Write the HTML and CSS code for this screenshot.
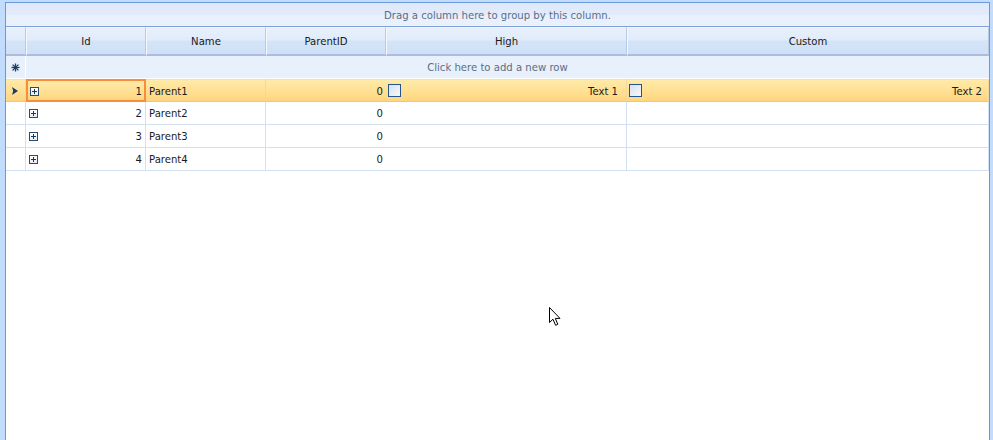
FILE: index.html
```html
<!DOCTYPE html>
<html>
<head>
<meta charset="utf-8">
<link rel="stylesheet" href="styles.css">
</head>
<body>
<div class="frame">
  <div class="group-panel">Drag a column here to group by this column.</div>
  <div class="grid">
    <div class="hdr ind"></div>
    <div class="hdr">Id</div>
    <div class="hdr">Name</div>
    <div class="hdr">ParentID</div>
    <div class="hdr">High</div>
    <div class="hdr">Custom</div>

    <div class="newrow ind"><svg width="9" height="9" viewBox="0 0 9 9"><g stroke="#1f3d66" stroke-width="1.3"><line x1="4.5" y1="0.5" x2="4.5" y2="8.5"/><line x1="0.5" y1="4.5" x2="8.5" y2="4.5"/><line x1="1.6" y1="1.6" x2="7.4" y2="7.4"/><line x1="7.4" y1="1.6" x2="1.6" y2="7.4"/></g></svg></div>
    <div class="newrow span">Click here to add a new row</div>

    <div class="cell ind sel"><svg width="6" height="8" viewBox="0 0 6 8"><path d="M0 0 L6 4 L0 8 L1.2 4 Z" fill="#1c3a63"/></svg></div>
    <div class="cell sel focus"><span class="exp"></span><span class="num">1</span></div>
    <div class="cell sel">Parent1</div>
    <div class="cell sel right">0</div>
    <div class="cell sel chk"><span class="box"></span><span class="num">Text 1</span></div>
    <div class="cell sel chk last"><span class="box"></span><span class="num">Text 2</span></div>

    <div class="cell ind"></div>
    <div class="cell"><span class="exp"></span><span class="num">2</span></div>
    <div class="cell">Parent2</div>
    <div class="cell right">0</div>
    <div class="cell"></div>
    <div class="cell"></div>

    <div class="cell ind"></div>
    <div class="cell"><span class="exp"></span><span class="num">3</span></div>
    <div class="cell">Parent3</div>
    <div class="cell right">0</div>
    <div class="cell"></div>
    <div class="cell"></div>

    <div class="cell ind"></div>
    <div class="cell"><span class="exp"></span><span class="num">4</span></div>
    <div class="cell">Parent4</div>
    <div class="cell right">0</div>
    <div class="cell"></div>
    <div class="cell"></div>
  </div>
  <svg class="cursor" width="13" height="20" viewBox="0 0 13 20"><path d="M0.5 0.5 L0.5 15.5 L4 12.2 L6.6 18.3 L8.8 17.3 L6.3 11.4 L11 11.4 Z" fill="#fff" stroke="#000" stroke-width="1" stroke-linejoin="round"/></svg>
</div>
</body>
</html>
```
FILE: styles.css
```css
html, body {
  margin: 0;
  padding: 0;
  background: #c2dcfd;
  height: 440px;
  overflow: hidden;
}
.frame {
  position: relative;
  margin: 2px 3px 0 5px;
  height: 438px;
  box-sizing: border-box;
  background: #fff;
  border: 1px solid #6b98d6;
  border-bottom: none;
  font-family: "DejaVu Sans", sans-serif;
  font-size: 10.1px;
  color: #1b1b1b;
}
.group-panel {
  height: 23px;
  line-height: 25px;
  text-align: center;
  color: #5a6d88;
  background: linear-gradient(#dfe9fa 0, #e1ebfa 50%, #e8f0fc 51%, #eaf1fc 100%);
  border-bottom: 1px solid #7fa3d6;
}
.grid {
  display: grid;
  grid-template-columns: 20px 120px 120px 120px 241px 1fr;
  grid-template-rows: 29px 23px 23px 23px 23px 23px;
}
.hdr {
  box-sizing: border-box;
  background: linear-gradient(#e8f0fc 0, #e1ebfa 45%, #d4e4f8 52%, #cfe0f7 100%);
  border-right: 1px solid #b8cbe3;
  border-left: 1px solid #f4f8fe;
  border-bottom: 2px solid #a9bedb;
  border-top: 1px solid #f1f6fd;
  display: flex;
  align-items: center;
  justify-content: center;
  color: #1a1a1a;
}
.hdr.ind {
  border-left: none;
}
.newrow {
  box-sizing: border-box;
  background: #e8f0fb;
  border-bottom: 1px solid #fff;
  border-right: 1px solid #fff;
  display: flex;
  align-items: center;
  justify-content: center;
  color: #5d6e86;
}
.newrow.span {
  grid-column: 2 / span 5;
  border-right: none;
  padding-right: 20px;
}
.cell {
  box-sizing: border-box;
  border-right: 1px solid #d3e0f1;
  border-bottom: 1px solid #d3e0f1;
  display: flex;
  align-items: center;
  padding: 1px 3px 0 3px;
  white-space: nowrap;
}
.cell:nth-child(6n) {
  border-right: none;
}
.cell.ind {
  justify-content: center;
  padding: 1px 1px 0 0;
}
.cell.right {
  justify-content: flex-end;
}
.cell.sel {
  background: linear-gradient(#ffeaa9 0, #ffe195 50%, #ffd57f 100%);
  border-top: 1px solid #ffe08e;
  border-bottom: 1px solid #ffc35c;
  border-right-color: #f3d89c;
}
.cell.focus {
  border: 2px solid #f88d3a;
  padding: 1px 2px 0 2px;
}
.exp {
  box-sizing: border-box;
  width: 9px;
  height: 9px;
  border: 1px solid #2a4a72;
  background: linear-gradient(#ffffff, #e6ecf4);
  position: relative;
  flex: none;
}
.exp::before {
  content: "";
  position: absolute;
  left: 1px;
  top: 3px;
  width: 5px;
  height: 1px;
  background: #1e3556;
}
.exp::after {
  content: "";
  position: absolute;
  left: 3px;
  top: 1px;
  width: 1px;
  height: 5px;
  background: #1e3556;
}
.num {
  margin-left: auto;
}
.chk {
  padding-left: 2px;
  padding-right: 8px;
}
.chk.last {
  padding-right: 6px;
}
.box {
  box-sizing: border-box;
  width: 13px;
  height: 13px;
  border: 1px solid #24558f;
  background: linear-gradient(135deg, #d9e0ea, #f6f8fb);
  flex: none;
  margin-top: -1px;
}
.cursor {
  position: absolute;
  left: 543px;
  top: 304px;
}
```
